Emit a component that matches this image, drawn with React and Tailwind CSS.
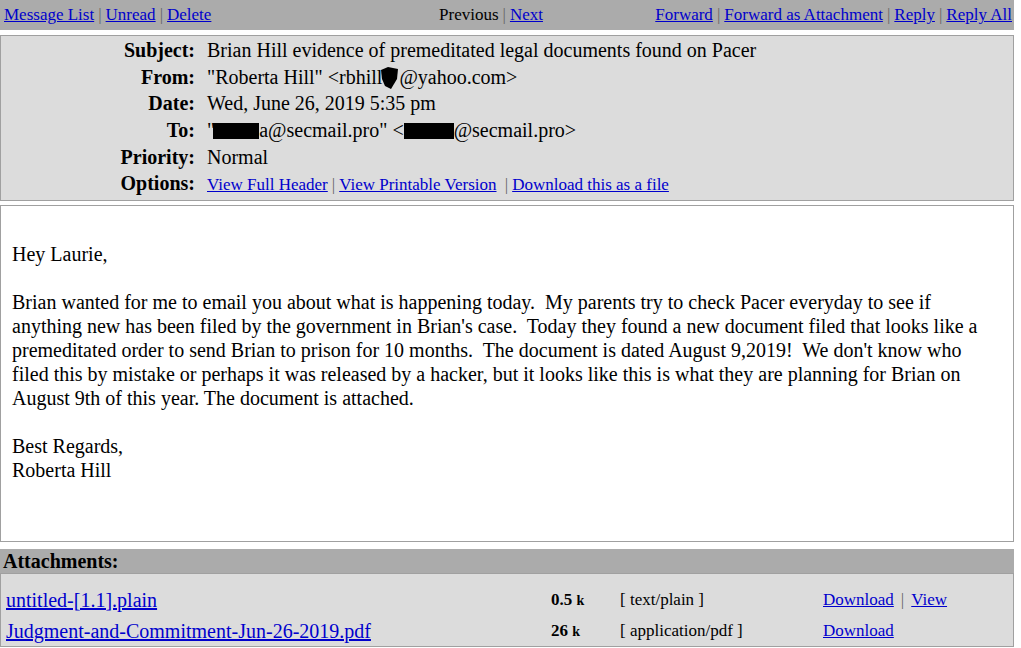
import React from 'react';

const serif = { fontFamily: '"Liberation Serif", "Times New Roman", serif' };

const A = ({ children, className = '' }) => (
  <a href="#" className={`text-[#0000cc] underline ${className}`}>
    {children}
  </a>
);

const Sep = () => <span className="text-[#666] mx-[4px]">|</span>;

const Blob = () => (
  <svg width="20" height="24" viewBox="0 0 20 24" className="inline-block align-[-6px] -ml-[3px]">
    <polygon points="2,4 9,1 19,3 18,13 12,23 6,20 3,13" fill="#000" />
  </svg>
);

const Bar = ({ w }) => <span className={`inline-block h-[16px] bg-black align-[-2px] ${w}`} />;

const HeaderRow = ({ label, children }) => (
  <div className="flex h-[26.6px] items-center">
    <div className="w-[194px] text-right font-bold">{label}</div>
    <div className="pl-[12px] whitespace-nowrap">{children}</div>
  </div>
);

const attachments = [
  { name: 'untitled-[1.1].plain', size: '0.5', type: '[ text/plain ]', view: true },
  { name: 'Judgment-and-Commitment-Jun-26-2019.pdf', size: '26', type: '[ application/pdf ]', view: false },
];

export default function App() {
  return (
    <div className="w-[1014px] bg-white text-black" style={serif}>
      {/* top nav */}
      <div className="flex h-[30px] items-center bg-[#ababab] text-[17px]">
        <div className="w-[330px] pl-[4px] whitespace-nowrap">
          <A>Message List</A>
          <Sep />
          <A>Unread</A>
          <Sep />
          <A>Delete</A>
        </div>
        <div className="w-[322px] text-center whitespace-nowrap">
          Previous
          <Sep />
          <A>Next</A>
        </div>
        <div className="flex-1 pr-[2px] text-right whitespace-nowrap">
          <A>Forward</A>
          <Sep />
          <A>Forward as Attachment</A>
          <Sep />
          <A>Reply</A>
          <Sep />
          <A>Reply All</A>
        </div>
      </div>

      {/* message header */}
      <div className="mt-[5px] h-[166px] border border-[#a0a0a0] bg-[#dcdcdc] pt-[1px] text-[20px]">
        <HeaderRow label="Subject:">Brian Hill evidence of premeditated legal documents found on Pacer</HeaderRow>
        <HeaderRow label="From:">
          "Roberta Hill" &lt;rbhill<Blob />@yahoo.com&gt;
        </HeaderRow>
        <HeaderRow label="Date:">Wed, June 26, 2019 5:35 pm</HeaderRow>
        <HeaderRow label="To:">
          "<Bar w="w-[46px] -ml-[2px]" />a@secmail.pro" &lt;<Bar w="w-[50px]" />@secmail.pro&gt;
        </HeaderRow>
        <HeaderRow label="Priority:">Normal</HeaderRow>
        <HeaderRow label="Options:">
          <span className="text-[17px]">
            <A>View Full Header</A>
            <Sep />
            <A>View Printable Version</A>
            <span className="text-[#666] mx-[4px]">&nbsp;|</span>
            <A>Download this as a file</A>
          </span>
        </HeaderRow>
      </div>

      {/* body */}
      <div className="mt-[4px] h-[337px] border border-[#a0a0a0] bg-white px-[11px] pt-[36px] text-[20px] leading-[24px] whitespace-nowrap">
        Hey Laurie,
        <br />
        <br />
        Brian wanted for me to email you about what is happening today.&nbsp; My parents try to check Pacer everyday to see if
        <br />
        anything new has been filed by the government in Brian's case.&nbsp; Today they found a new document filed that looks like a
        <br />
        premeditated order to send Brian to prison for 10 months.&nbsp; The document is dated August 9,2019!&nbsp; We don't know who
        <br />
        filed this by mistake or perhaps it was released by a hacker, but it looks like this is what they are planning for Brian on
        <br />
        August 9th of this year. The document is attached.
        <br />
        <br />
        Best Regards,
        <br />
        Roberta Hill
      </div>

      {/* attachments */}
      <div className="mt-[7px] flex h-[24px] items-center bg-[#ababab] pl-[3px] text-[20px] font-bold">
        Attachments:
      </div>
      <div className="h-[74px] border border-[#a0a0a0] bg-[#dcdcdc] pt-[10px]">
        {attachments.map((a) => (
          <div key={a.name} className="grid h-[31px] grid-cols-[550px_69px_203px_1fr] items-center whitespace-nowrap">
            <div className="pl-[5px] text-[20px]">
              <A>{a.name}</A>
            </div>
            <div className="text-[17px] font-bold">
              {a.size} <span className="text-[14px]">k</span>
            </div>
            <div className="text-[17px]">{a.type}</div>
            <div className="text-[17px]">
              <A>Download</A>
              {a.view && (
                <>
                  <span className="text-[#666] mx-[7px]">|</span>
                  <A>View</A>
                </>
              )}
            </div>
          </div>
        ))}
      </div>
    </div>
  );
}
